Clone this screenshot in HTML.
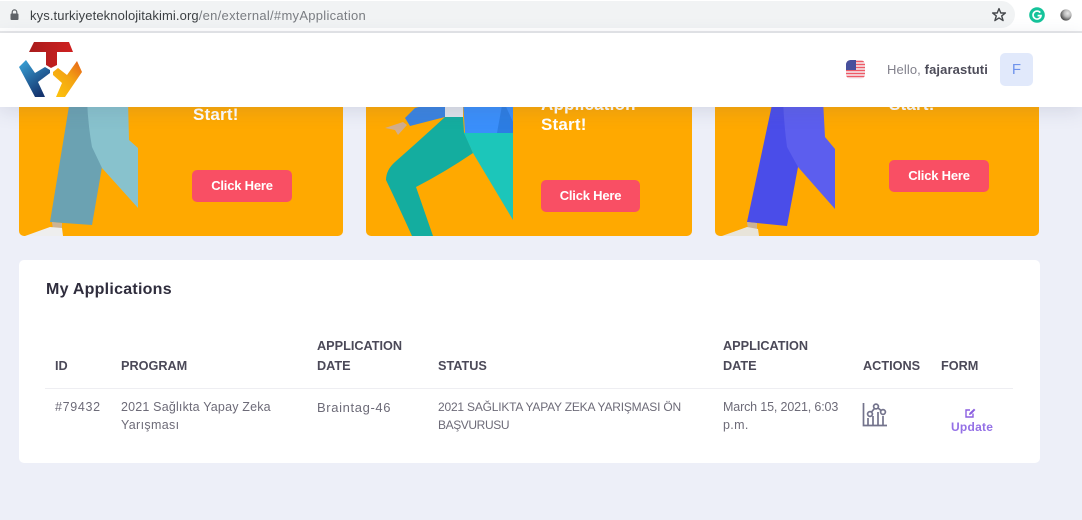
<!DOCTYPE html>
<html lang="en"><head><meta charset="utf-8"><title>My Applications</title>
<style>
html,body{margin:0;padding:0;width:1082px;height:520px;overflow:hidden;background:#edeff8;font-family:"Liberation Sans","Noto Sans CJK SC",sans-serif}
.t{position:absolute;white-space:nowrap;line-height:1}
.card{position:absolute;background:#ffa900;border-radius:5px;height:236px;top:0;overflow:hidden}
.btn{position:absolute;width:100px;height:32px;background:#f94f64;border-radius:5px;color:#fff;font-size:13px;font-weight:bold;text-align:center;line-height:32px;letter-spacing:-.2px}
.big{position:absolute;color:#fff;font-weight:bold;font-size:17px;line-height:1;letter-spacing:.2px;white-space:nowrap}
.th{color:#4b4958;font-weight:bold;font-size:12.7px}
.td{color:#6d6b78;font-size:12.5px;letter-spacing:.35px}
svg{position:absolute;overflow:visible}
</style></head><body>

<div class="card" style="left:19px;width:324px">
<svg width="1082" height="236" style="left:-19px;top:0">
<path d="M100 100H128L115 111Q105 111 100 100Z" fill="#e8505b"/>
<path d="M70 100H90L102 167L92 225L50 222Z" fill="#6ba2b2"/>
<path d="M87 100H128L129 140L138 148V208L102 168L92 147Q88 125 87 100Z" fill="#88c2cd"/>
<path d="M52 222L62 223L62 230L53 230Z" fill="#cdb393"/>
<path d="M25 236L50 227L62 228L63 236Z" fill="#eeeeee"/>
</svg>
<div class="big" style="left:174px;top:106px">Start!</div>
<div class="btn" style="left:173px;top:170px">Click Here</div>
</div>

<div class="card" style="left:366px;width:326px">
<svg width="1082" height="236" style="left:-366px;top:0">
<path d="M385 128L403 122L407 125L398 135L395 130Z" fill="#d2ae8e"/>
<path d="M405 118L415 108L445 100V117L410 126Z" fill="#3a83e0"/>
<path d="M445 100H463V117H445Z" fill="#dfe3ea"/>
<path d="M445 117H463L464 132L473 153Q445 172 416 187L433 236H412Q398 205 386 180Q386 170 395 162Q420 140 445 117Z" fill="#14ad9f"/>
<path d="M464 133H513V220L473 153Z" fill="#1cc6ba"/>
<path d="M463 100H513V133H465Z" fill="#3a8ffb"/>
<path d="M503 100L513 122V133H497Z" fill="#2c7de3"/>
</svg>
<div class="big" style="left:175px;top:96px">Application</div>
<div class="big" style="left:175px;top:116px">Start!</div>
<div class="btn" style="left:175px;top:180px;width:99px">Click Here</div>
</div>

<div class="card" style="left:715px;width:324px">
<svg width="1082" height="236" style="left:-715px;top:0">
<path d="M773 100H784L798 167L787 226L747 222Z" fill="#4a4de9"/>
<path d="M783 100H823L825 137L835 149V209L798 167L787 147Q784 125 783 100Z" fill="#5c5eee"/>
<path d="M747 222L757 223L757 230L748 230Z" fill="#cdb393"/>
<path d="M722 236L747 227L758 229L759 236Z" fill="#e8e4da"/>
</svg>
<div class="big" style="left:174px;top:96px">Start!</div>
<div class="btn" style="left:174px;top:160px">Click Here</div>
</div>

<!-- browser bar -->
<div style="position:absolute;left:0;top:0;width:1082px;height:31px;background:#fff"></div>
<div style="position:absolute;left:-20px;top:1px;width:1035px;height:27px;background:#f1f3f4;border-radius:14px"></div>
<div style="position:absolute;left:0;top:31px;width:1082px;height:2px;background:#e6e7e9"></div>
<svg width="12" height="12" style="left:9px;top:9px"><rect x="1.5" y="4.5" width="8" height="6.5" rx="1" fill="#5f6368"/><path d="M3.2 5V3.2a2.3 2.3 0 0 1 4.6 0V5" fill="none" stroke="#5f6368" stroke-width="1.2"/></svg>
<div class="t" style="left:30px;top:8.5px;font-size:13px;color:#7a7d82;letter-spacing:.28px"><span style="color:#3c4043;letter-spacing:.11px">kys.turkiyeteknolojitakimi.org</span>/en/external/#myApplication</div>
<svg width="16" height="16" style="left:991px;top:7px"><path d="M8 1.6L9.8 6H14.4L10.7 8.9L12.1 13.6L8 10.9L3.9 13.6L5.3 8.9L1.6 6H6.2Z" fill="none" stroke="#45484c" stroke-width="1.4" stroke-linejoin="round"/></svg>
<svg width="16" height="16" style="left:1029px;top:7px"><circle cx="8" cy="8" r="7.8" fill="#15c39a"/><path d="M11.2 5.6A4 4 0 1 0 12 8.6H8.6" fill="none" stroke="#fff" stroke-width="1.7"/></svg>
<svg width="14" height="14" style="left:1059px;top:8px"><defs><radialGradient id="g" cx=".65" cy=".35" r=".7"><stop offset="0" stop-color="#e8e8e8"/><stop offset=".45" stop-color="#bbb"/><stop offset="1" stop-color="#444"/></radialGradient></defs><circle cx="7" cy="7" r="5.6" fill="url(#g)"/></svg>

<!-- header -->
<div style="position:absolute;left:0;top:33px;width:1082px;height:74px;background:#fff;box-shadow:0 4px 18px rgba(90,95,130,.16)"></div>
<svg width="1082" height="100" style="left:0;top:0">
<defs>
<linearGradient id="r" x1="0" y1="0" x2="1" y2="0"><stop offset="0" stop-color="#a81c1c"/><stop offset="1" stop-color="#cf2020"/></linearGradient>
<linearGradient id="b" x1="0" y1="0" x2=".6" y2="1"><stop offset="0" stop-color="#3aa7dc"/><stop offset="1" stop-color="#15346e"/></linearGradient>
<linearGradient id="y" x1="1" y1="0" x2=".2" y2="1"><stop offset="0" stop-color="#e5601a"/><stop offset=".5" stop-color="#f4a512"/><stop offset="1" stop-color="#fcc10d"/></linearGradient>
</defs>
<path d="M34 42H69L73 52H57V65L51 68L46 65V52H29Z" fill="url(#r)"/>
<path d="M19 67L26 60L35 73L45 67L50 70V73L38 82L45 97H35Z" fill="url(#b)"/>
<path d="M77 61L82 72L65 97H56L62 83L53 75V72L58 68L67 75Z" fill="url(#y)"/>
</svg>
<svg width="20" height="20" style="left:846px;top:60px"><defs><clipPath id="f"><rect width="19" height="19" rx="4.5"/></clipPath></defs><g clip-path="url(#f)"><rect width="19" height="19" fill="#f5f0f2"/><path d="M0 1.5H19M0 4.5H19M0 7.5H19M0 10.5H19M0 13.5H19M0 16.5H19" stroke="#ee5a66" stroke-width="1.5"/><rect width="10" height="10" fill="#47509c"/></g></svg>
<div class="t" style="left:887px;top:63px;font-size:13px;color:#82818c;letter-spacing:.11px">Hello, <b style="color:#4d4c59">fajarastuti</b></div>
<div style="position:absolute;left:1000px;top:53px;width:33px;height:33px;border-radius:5px;background:#e1e9fb;color:#6f93ec;font-size:15px;line-height:33px;text-align:center">F</div>

<!-- table card -->
<div style="position:absolute;left:19px;top:260px;width:1021px;height:203px;background:#fff;border-radius:5px"></div>
<div class="t" style="left:46px;top:282px;font-size:16px;font-weight:bold;color:#2f2d3d;letter-spacing:.25px">My Applications</div>

<div class="t th" style="left:55px;top:360px">ID</div>
<div class="t th" style="left:121px;top:360px">PROGRAM</div>
<div class="t th" style="left:317px;top:340px">APPLICATION</div>
<div class="t th" style="left:317px;top:360px">DATE</div>
<div class="t th" style="left:438px;top:360px">STATUS</div>
<div class="t th" style="left:723px;top:340px">APPLICATION</div>
<div class="t th" style="left:723px;top:360px">DATE</div>
<div class="t th" style="left:863px;top:360px">ACTIONS</div>
<div class="t th" style="left:941px;top:360px">FORM</div>

<div style="position:absolute;left:45px;top:388px;width:968px;height:1px;background:#eeeef2"></div>

<div class="t td" style="left:55px;top:401px;letter-spacing:.68px">#79432</div>
<div class="t td" style="left:121px;top:401px;letter-spacing:.18px">2021 Sağlıkta Yapay Zeka</div>
<div class="t td" style="left:121px;top:419px">Yarışması</div>
<div class="t td" style="left:317px;top:401px;font-size:13px;letter-spacing:.63px">Braintag-46</div>
<div class="t td" style="left:438px;top:401px;font-size:12px;letter-spacing:-.2px">2021 SAĞLIKTA YAPAY ZEKA YARIŞMASI ÖN</div>
<div class="t td" style="left:438px;top:419px;font-size:12px;letter-spacing:-.4px">BAŞVURUSU</div>
<div class="t td" style="left:723px;top:401px;letter-spacing:-.15px">March 15, 2021, 6:03</div>
<div class="t td" style="left:723px;top:419px">p.m.</div>

<svg width="26" height="26" style="left:862px;top:402px" fill="none" stroke="#73738c" stroke-width="1.7"><path d="M1.5 1V23.5H25"/><path d="M6 23V16M11 23V14M16 23V10M21 23V14"/><circle cx="8" cy="12" r="2.4" fill="#fff"/><circle cx="14" cy="4.5" r="2.4" fill="#fff"/><circle cx="21" cy="10" r="2.4" fill="#fff"/><path d="M9.5 10L12.5 6.4M16 6L19 8.4"/></svg>
<svg width="11" height="10" style="left:965px;top:408px" fill="none" stroke="#8b5fe0" stroke-width="1.4"><path d="M8 5.5V9H1V2H5"/><path d="M4 7L4.4 5L9 .6L10.4 2L6 6.5Z" fill="#8b5fe0" stroke="none"/></svg>
<div class="t" style="left:951px;top:421px;font-size:12px;font-weight:bold;color:#9470e6;letter-spacing:.25px">Update</div>

</body></html>
